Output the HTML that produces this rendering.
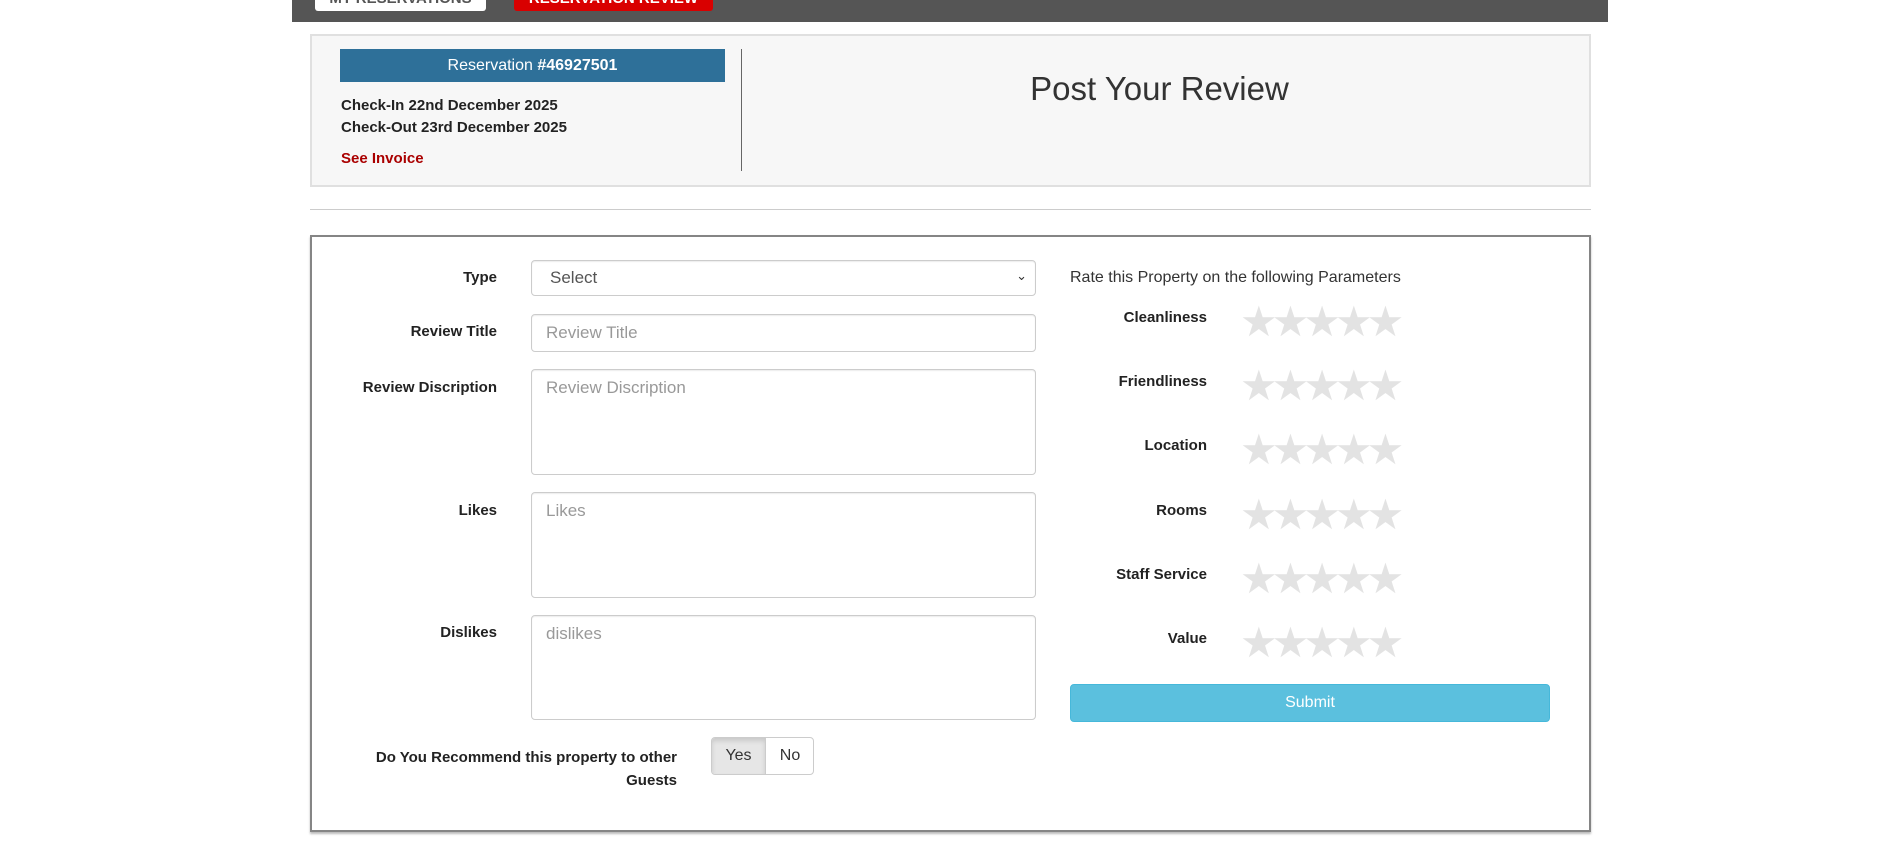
<!DOCTYPE html>
<html><head><meta charset="utf-8"><style>
*{box-sizing:border-box;margin:0;padding:0}
body{width:1902px;height:861px;background:#fff;font-family:"Liberation Sans",Arial,sans-serif;color:#333;position:relative;overflow:hidden}
.a{position:absolute}
.lbl{position:absolute;font-weight:bold;font-size:15px;color:#222;text-align:right}
.inp{position:absolute;left:531px;width:505px;border:1px solid #ccc;border-radius:4px;background:#fff;box-shadow:inset 0 1px 1px rgba(0,0,0,.075);font-size:17px;color:#999;padding:8px 14px}
.rl{position:absolute;right:695px;font-weight:bold;font-size:15px;color:#222}
.stars{position:absolute;left:1240px;color:#e3e3e3;font-size:42px;letter-spacing:-6px;line-height:40px}
</style></head><body>
<div class="a" style="left:292px;top:0;width:1316px;height:22px;background:#555"></div>
<div class="a" style="left:315px;top:0;width:171px;height:11px;background:#fff;border-radius:0 0 3px 3px;overflow:hidden"><div style="position:absolute;top:-10px;width:171px;text-align:center;font-weight:bold;font-size:15px;color:#555">MY RESERVATIONS</div></div>
<div class="a" style="left:514px;top:0;width:199px;height:11px;background:#d90000;border-radius:0 0 3px 3px;overflow:hidden"><div style="position:absolute;top:-10px;width:199px;text-align:center;font-weight:bold;font-size:15px;color:#fff">RESERVATION REVIEW</div></div>

<div class="a" style="left:310px;top:34px;width:1281px;height:153px;background:#f7f7f7;border:2px solid #e0e0e0"></div>
<div class="a" style="left:340px;top:49px;width:385px;height:33px;background:#2e7099;color:#fff;font-size:16px;text-align:center;line-height:33px">Reservation <b>#46927501</b></div>
<div class="a" style="left:341px;top:95px;font-size:15px;font-weight:bold;color:#222;line-height:22px">Check-In 22nd December 2025<br>Check-Out 23rd December 2025</div>
<div class="a" style="left:341px;top:150px;font-size:15px;font-weight:bold;color:#a00">See Invoice</div>
<div class="a" style="left:741px;top:49px;width:1px;height:122px;background:#666"></div>
<div class="a" style="left:735px;width:849px;top:70px;text-align:center;font-size:33px;color:#333">Post Your Review</div>

<div class="a" style="left:310px;top:209px;width:1281px;height:1px;background:#ccc"></div>

<div class="a" style="left:310px;top:235px;width:1281px;height:597px;border:2px solid #858585;box-shadow:0 2px 2px #bbb"></div>

<div class="lbl" style="right:1405px;top:269px">Type</div>
<div class="inp" style="top:260px;height:36px;color:#555;padding:7px 18px">Select<span style="position:absolute;right:8px;top:7px;font-size:13px;color:#333">&#8964;</span></div>
<div class="lbl" style="right:1405px;top:323px">Review Title</div>
<div class="inp" style="top:314px;height:38px">Review Title</div>
<div class="lbl" style="right:1405px;top:379px">Review Discription</div>
<div class="inp" style="top:369px;height:106px">Review Discription</div>
<div class="lbl" style="right:1405px;top:502px">Likes</div>
<div class="inp" style="top:492px;height:106px">Likes</div>
<div class="lbl" style="right:1405px;top:624px">Dislikes</div>
<div class="inp" style="top:615px;height:105px">dislikes</div>

<div class="lbl" style="right:1225px;top:746px;line-height:23px">Do You Recommend this property to other<br>Guests</div>
<div class="a" style="left:711px;top:737px;width:103px;height:38px;border:1px solid #ccc;border-radius:4px;overflow:hidden;font-size:16px;line-height:36px">
<div class="a" style="left:0;top:0;width:54px;height:36px;background:#e6e6e6;box-shadow:inset 0 3px 5px rgba(0,0,0,.125);text-align:center;border-right:1px solid #ccc">Yes</div>
<div class="a" style="left:54px;top:0;width:48px;height:36px;text-align:center">No</div></div>

<div class="a" style="left:1070px;top:269px;font-size:16px;color:#333">Rate this Property on the following Parameters</div>
<div class="rl" style="top:309px">Cleanliness</div><div class="stars" style="top:302px">★★★★★</div>
<div class="rl" style="top:373px">Friendliness</div><div class="stars" style="top:366px">★★★★★</div>
<div class="rl" style="top:437px">Location</div><div class="stars" style="top:430px">★★★★★</div>
<div class="rl" style="top:502px">Rooms</div><div class="stars" style="top:495px">★★★★★</div>
<div class="rl" style="top:566px">Staff Service</div><div class="stars" style="top:559px">★★★★★</div>
<div class="rl" style="top:630px">Value</div><div class="stars" style="top:623px">★★★★★</div>
<div class="a" style="left:1070px;top:684px;width:480px;height:38px;background:#5bc0de;border:1px solid #46b8da;border-radius:4px;color:#fff;font-size:16px;text-align:center;line-height:36px">Submit</div>
</body></html>
